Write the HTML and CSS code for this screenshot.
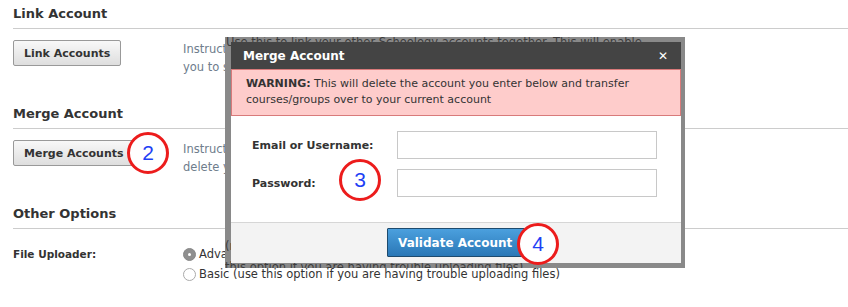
FILE: index.html
```html
<!DOCTYPE html>
<html>
<head>
<meta charset="utf-8">
<link rel="stylesheet" href="styles.css">
</head>
<body>
<div class="page">
  <section class="section">
    <h2 class="heading">Link Account</h2>
    <div class="row">
      <div class="col-left"><button class="btn">Link Accounts</button></div>
      <p class="instr">Instructions: Use this to link your other Schoology accounts together. This will enable<br>you to switch between accounts without logging out</p>
    </div>
  </section>
  <section class="section">
    <h2 class="heading">Merge Account</h2>
    <div class="row">
      <div class="col-left"><button class="btn">Merge Accounts</button></div>
      <p class="instr">Instructions: Use this to merge another account into this one. This will<br>delete your other account</p>
    </div>
  </section>
  <section class="section">
    <h2 class="heading">Other Options</h2>
    <div class="row opt-row">
      <div class="col-left opt-label">File Uploader:</div>
      <div class="radios">
        <label class="radio"><span class="dot checked"></span>Advanced (recommended)</label>
        <label class="radio"><span class="dot"></span>Basic (use this option if you are having trouble uploading files)</label>
      </div>
    </div>
  </section>
</div>

<div class="frame">
  <div class="ghost ghost-top">Use this to link your other Schoology accounts together. This will enable</div>
  <div class="ghost ghost-mid">(recommended)</div>
  <div class="ghost ghost-bot">this option if you are having trouble uploading files)</div>
  <div class="dialog">
    <div class="dlg-head"><span>Merge Account</span><span class="close">&#x2715;</span></div>
    <div class="warn"><b>WARNING:</b> This will delete the account you enter below and transfer courses/groups over to your current account</div>
    <div class="dlg-body">
      <div class="field"><span class="flabel">Email or Username:</span><span class="input"></span></div>
      <div class="field"><span class="flabel">Password:</span><span class="input"></span></div>
    </div>
    <div class="dlg-foot"><button class="btn-blue">Validate Account</button></div>
  </div>
</div>

<div class="mark m2">2</div>
<div class="mark m3">3</div>
<div class="mark m4">4</div>
</body>
</html>
```

FILE: styles.css
```css
html, body {
  margin: 0;
  padding: 0;
  background: #fff;
}
body {
  font-family: "DejaVu Sans", "Liberation Sans", sans-serif;
  font-size: 11px;
  color: #333;
  width: 848px;
  height: 307px;
  overflow: hidden;
  position: relative;
}
.page {
  padding-left: 13px;
}
.section {
  height: 100px;
}
.heading {
  margin: 0;
  padding: 6px 0 6px;
  line-height: 16px;
  font-size: 13px;
  font-weight: bold;
  color: #333;
  border-bottom: 1px solid #ccc;
}
.row {
  display: flex;
  margin-top: 11px;
}
.col-left {
  width: 170px;
  flex: none;
}
.btn {
  font-family: inherit;
  font-size: 11px;
  font-weight: bold;
  color: #333;
  height: 26px;
  padding: 0 10px;
  border: 1px solid #999;
  border-radius: 2px;
  background: linear-gradient(#f8f8f8, #dedede);
}
.instr {
  margin: 0;
  font-size: 11.5px;
  line-height: 18px;
  color: #6e7d8c;
  white-space: nowrap;
}
.opt-row {
  margin-top: 15px;
}
.opt-label {
  font-weight: bold;
  font-size: 10.5px;
  line-height: 20px;
}
.radios {
  display: flex;
  flex-direction: column;
  font-size: 11.5px;
}
.radio {
  display: flex;
  align-items: center;
  gap: 3px;
  line-height: 20px;
  height: 20px;
}
.dot {
  width: 13px;
  height: 13px;
  border-radius: 50%;
  border: 1px solid #aaa;
  background: #fff;
  box-sizing: border-box;
  position: relative;
  flex: none;
}
.dot.checked {
  background: #8f8f8f;
  border-color: #888;
}
.dot.checked::after {
  content: "";
  position: absolute;
  left: 4px;
  top: 4px;
  width: 3px;
  height: 3px;
  border-radius: 50%;
  background: #fff;
}

/* modal */
.frame {
  position: absolute;
  left: 225px;
  top: 37px;
  width: 460px;
  height: 231px;
  box-sizing: border-box;
  padding: 5px 4px 5px 6px;
  background: #898989;
  overflow: hidden;
}
.ghost {
  position: absolute;
  left: 1px;
  color: #3c3c3c;
  white-space: nowrap;
  line-height: 14px;
  font-size: 11.5px;
}
.ghost-top { top: -2px; }
.ghost-mid { top: 202px; left: 0; }
.ghost-bot { top: 223px; left: 0; }
.dialog {
  position: relative;
  height: 221px;
  background: #fff;
  display: flex;
  flex-direction: column;
}
.dlg-head {
  height: 27px;
  background: #444;
  color: #fff;
  font-weight: bold;
  font-size: 12px;
  display: flex;
  align-items: center;
  justify-content: space-between;
  padding: 0 13px 0 12px;
}
.close {
  font-size: 12px;
  font-weight: bold;
}
.warn {
  background: #fecccb;
  border: 1px solid #d87a7a;
  padding: 6px 14px 0;
  box-sizing: border-box;
  height: 47px;
  line-height: 16px;
  color: #333;
}
.dlg-body {
  flex: 1;
  padding: 15px 22px 0 21px;
  display: flex;
  flex-direction: column;
  gap: 10px;
}
.field {
  display: flex;
  align-items: center;
}
.flabel {
  width: 145px;
  font-weight: bold;
  color: #333;
}
.input {
  width: 260px;
  height: 28px;
  box-sizing: border-box;
  border: 1px solid #c8c8c8;
  background: #fff;
}
.dlg-foot {
  height: 41px;
  box-sizing: border-box;
  border-top: 1px solid #d6d6d6;
  background: #f3f3f3;
  display: flex;
  justify-content: center;
  padding-top: 5px;
}
.btn-blue {
  height: 29px;
  width: 138px;
  font-family: inherit;
  font-size: 12px;
  font-weight: bold;
  color: #fff;
  border: 1px solid #1d4a6d;
  border-radius: 1px;
  background: linear-gradient(#4ba0de, #2a77b6);
  text-align: left;
  padding: 0 10px;
}

/* annotation marks */
.mark {
  position: absolute;
  width: 42px;
  height: 42px;
  box-sizing: border-box;
  border: 3px solid #ec1c1c;
  border-radius: 50%;
  background: #fff;
  color: #1e3ff5;
  font-family: "Liberation Sans", sans-serif;
  font-size: 21px;
  display: flex;
  align-items: center;
  justify-content: center;
}
.m2 { left: 127px; top: 132px; }
.m3 { left: 339px; top: 159px; }
.m4 { left: 517px; top: 223px; }
```
